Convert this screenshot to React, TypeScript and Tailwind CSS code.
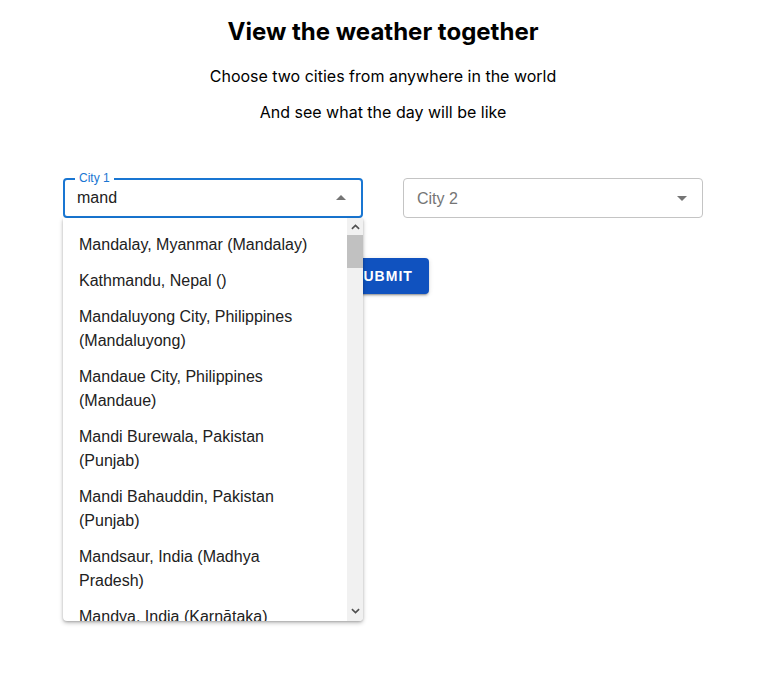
import React from "react";

const options = [
  "Mandalay, Myanmar (Mandalay)",
  "Kathmandu, Nepal ()",
  "Mandaluyong City, Philippines (Mandaluyong)",
  "Mandaue City, Philippines (Mandaue)",
  "Mandi Burewala, Pakistan (Punjab)",
  "Mandi Bahauddin, Pakistan (Punjab)",
  "Mandsaur, India (Madhya Pradesh)",
  "Mandya, India (Karnātaka)",
];

function ArrowDrop({ up }: { up?: boolean }) {
  return (
    <svg
      viewBox="0 0 24 24"
      className={`w-6 h-6 fill-[#757575] ${up ? "rotate-180" : ""}`}
    >
      <path d="M7 10l5 5 5-5z" />
    </svg>
  );
}

function Chevron({ up }: { up?: boolean }) {
  return (
    <svg viewBox="0 0 10 6" className={`w-[9px] h-[6px] ${up ? "" : "rotate-180"}`}>
      <polyline
        points="1,5 5,1.2 9,5"
        fill="none"
        stroke="#505050"
        strokeWidth="1.8"
      />
    </svg>
  );
}

export default function App() {
  return (
    <div className="w-[766px] min-h-[673px] bg-white pt-4 text-center text-black font-['Inter',sans-serif]">
      <h1 className="text-[24px] leading-8 font-bold">View the weather together</h1>
      <p className="mt-4 text-[16px] leading-6">Choose two cities from anywhere in the world</p>
      <p className="mt-3 text-[16px] leading-6">And see what the day will be like</p>

      <div className="font-['Liberation_Sans',Arial,sans-serif]">
        <div className="mt-[54px] flex justify-center gap-10">
          {/* City 1, open */}
          <div className="relative w-[300px] h-10 rounded-[4px] border-2 border-[#1976d2] flex items-center pl-3 pr-2">
            <span className="absolute -top-[10px] left-[10px] px-1 bg-white text-[12px] leading-4 text-[#1976d2]">
              City 1
            </span>
            <span className="flex-1 text-left text-[16px] text-[#212121]">mand</span>
            <ArrowDrop up />

            {/* dropdown list */}
            <div className="absolute left-[-2px] top-[38px] z-10 w-[300px] h-[403px] bg-white rounded-b-[4px] shadow-[0_2px_4px_rgba(0,0,0,0.25),0_1px_2px_rgba(0,0,0,0.15)] flex overflow-hidden">
              <ul className="flex-1 pt-[9px] text-left">
                {options.map((o) => (
                  <li
                    key={o}
                    className="pl-4 pr-6 py-[6px] text-[16px] leading-6 text-[#212121]"
                  >
                    {o}
                  </li>
                ))}
              </ul>
              <div className="w-4 h-full bg-[#f1f1f1] flex flex-col items-center">
                <div className="h-[17px] w-full flex items-center justify-center">
                  <Chevron up />
                </div>
                <div className="h-[33px] w-full bg-[#c1c1c1]" />
                <div className="flex-1" />
                <div className="h-[17px] w-full flex items-center justify-center mb-[2px]">
                  <Chevron />
                </div>
              </div>
            </div>
          </div>

          {/* City 2 */}
          <div className="w-[300px] h-10 rounded-[4px] border border-[#c4c4c4] flex items-center pl-[13px] pr-2">
            <span className="flex-1 pt-px text-left text-[16px] text-[#757575]">City 2</span>
            <ArrowDrop />
          </div>
        </div>

        <div className="mt-10 flex justify-center">
          <button className="h-9 px-4 rounded-[4px] bg-[#1052bf] text-white text-[14px] font-bold tracking-[1px] shadow-[0_3px_1px_-2px_rgba(0,0,0,0.2),0_2px_2px_rgba(0,0,0,0.14),0_1px_5px_rgba(0,0,0,0.12)]">
            SUBMIT
          </button>
        </div>
      </div>
    </div>
  );
}
